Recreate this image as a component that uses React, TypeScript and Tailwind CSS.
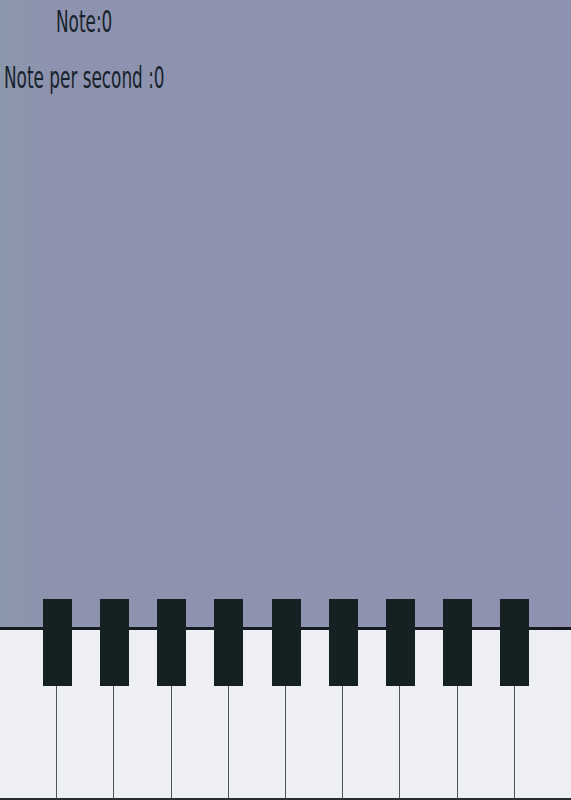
import React from "react";

export default function App() {
  const whites = Array.from({ length: 10 });
  const blacks = Array.from({ length: 9 });
  return (
    <div className="flex h-[800px] w-full flex-col overflow-hidden bg-[linear-gradient(to_right,#8b97ab_0%,#8d93ae_8%,#8e92b0_100%)]">
      <div
        className="text-[#18222c]"
        style={{ fontFamily: '"DejaVu Sans Condensed", "Liberation Sans", sans-serif' }}
      >
        <div className="ml-[56px] mt-[7px] origin-left scale-x-[0.625] text-[30px] leading-[30px] whitespace-nowrap">
          Note:0
        </div>
        <div className="ml-[4px] mt-[26px] origin-left scale-x-[0.625] text-[30px] leading-[30px] whitespace-nowrap">
          Note per second :0
        </div>
      </div>
      <div className="relative mt-auto h-[173px] border-t-[3px] border-[#161b1f]">
        <div className="flex h-full w-full">
          {whites.map((_, i) => (
            <div
              key={i}
              className={`h-full flex-1 border-b-2 border-b-[#2a2d30] bg-[#eeeff4] ${i < 9 ? "border-r border-r-[#50545a]" : ""}`}
            />
          ))}
        </div>
        {blacks.map((_, i) => (
          <div
            key={i}
            className="absolute top-[-31px] h-[87px] w-[29px] bg-[#142021]"
            style={{ left: `calc(${((i + 1) * 100) / 10}% - 14px)` }}
          />
        ))}
      </div>
    </div>
  );
}
